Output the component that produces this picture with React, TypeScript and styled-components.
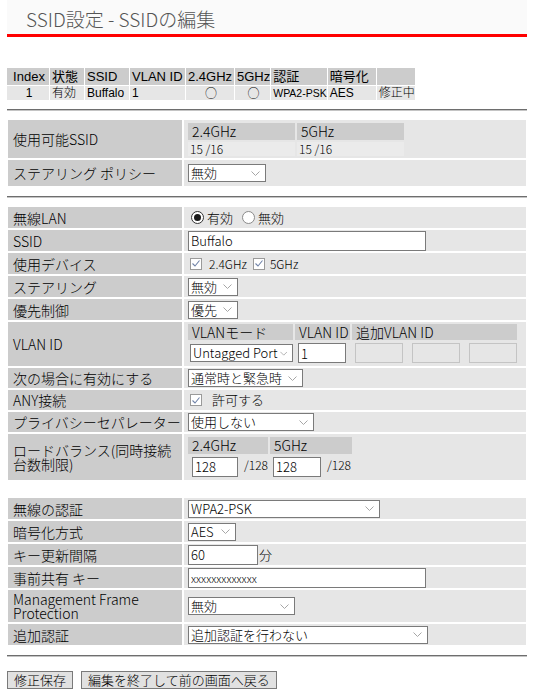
import React, { FC, ReactNode } from 'react'
import styled, { createGlobalStyle } from 'styled-components'

const jp = `"Noto Sans CJK JP", "DejaVu Sans", sans-serif`
const ui = `"Liberation Sans", "Noto Sans CJK JP", sans-serif`

const GlobalStyle = createGlobalStyle`
  *, *::before, *::after { box-sizing: border-box; }
  body {
    margin: 0;
    background: #fff;
    color: #000;
    font-family: ${jp};
    font-weight: 300;
  }
`

type THead = { label: string, w: number, center?: boolean }

const STATUS_HEAD: THead[] = [
  { label: 'Index', w: 42, center: true },
  { label: '状態', w: 34 },
  { label: 'SSID', w: 44 },
  { label: 'VLAN ID', w: 55 },
  { label: '2.4GHz', w: 48 },
  { label: '5GHz', w: 33 },
  { label: '認証', w: 51 },
  { label: '暗号化', w: 48 },
  { label: '', w: 37 },
]

type TCell = { text: string, center?: boolean, small?: boolean, mark?: boolean }

const STATUS_ROW: TCell[] = [
  { text: '1', center: true },
  { text: '有効' },
  { text: 'Buffalo' },
  { text: '1' },
  { text: '○', center: true, mark: true },
  { text: '○', center: true, mark: true },
  { text: 'WPA2-PSK', small: true },
  { text: 'AES' },
  { text: '修正中' },
]

const Chevron: FC = () => (
  <svg width="9" height="5" viewBox="0 0 9 5" aria-hidden>
    <polyline points="0.5,0.5 4.5,4.5 8.5,0.5" fill="none" stroke="#a6a6a6" strokeWidth="1" />
  </svg>
)

const Select: FC<{ w: number, children: ReactNode }> = ({ w, children }) => (
  <S.SelectBox $w={w}>
    <span>{children}</span>
    <Chevron />
  </S.SelectBox>
)

const Check: FC = () => (
  <S.CheckBox>
    <svg width="8" height="7" viewBox="0 0 8 7" aria-hidden>
      <polyline points="0.5,3.5 3,6 7.5,0.5" fill="none" stroke="#7083a8" strokeWidth="1.1" />
    </svg>
  </S.CheckBox>
)

export default function App() {
  return (
    <S.Page>
      <GlobalStyle />
      <S.Header>
        <S.Title>SSID設定 - SSIDの編集</S.Title>
      </S.Header>

      <S.StatusTable>
        <thead>
          <tr>
            {STATUS_HEAD.map((h, i) => (
              <S.StatusHead key={i} $w={h.w} $center={h.center}>{h.label}</S.StatusHead>
            ))}
          </tr>
        </thead>
        <tbody>
          <tr>
            {STATUS_ROW.map((c, i) => (
              <S.StatusCell key={i} $center={c.center} $small={c.small} $mark={c.mark}>{c.text}</S.StatusCell>
            ))}
          </tr>
        </tbody>
      </S.StatusTable>
      <S.Divider />

      <S.FormTable $top={7}>
        <tbody>
          <S.Row $h={38}>
            <S.Label>使用可能SSID</S.Label>
            <S.Value>
              <S.SubTable>
                <colgroup><S.Col $w={107} /><S.Col $w={107} /></colgroup>
                <tbody>
                  <tr>
                    <S.SubHead $h={17}>2.4GHz</S.SubHead>
                    <S.SubHead $h={17}>5GHz</S.SubHead>
                  </tr>
                  <tr>
                    <S.Count>15 /16</S.Count>
                    <S.Count>15 /16</S.Count>
                  </tr>
                </tbody>
              </S.SubTable>
            </S.Value>
          </S.Row>
          <S.Row $h={26}>
            <S.Label>ステアリング ポリシー</S.Label>
            <S.Value><Select w={78}>無効</Select></S.Value>
          </S.Row>
        </tbody>
      </S.FormTable>
      <S.Divider />

      <S.FormTable $top={7}>
        <tbody>
          <S.Row $h={21}>
            <S.Label>無線LAN</S.Label>
            <S.Value>
              <S.Inline $gap={9} $indent={3}>
                <S.Choice $gap={3}><S.Radio $on />有効</S.Choice>
                <S.Choice $gap={3}><S.Radio />無効</S.Choice>
              </S.Inline>
            </S.Value>
          </S.Row>
          <S.Row $h={21}>
            <S.Label>SSID</S.Label>
            <S.Value><S.TextBox $w={238} defaultValue="Buffalo" /></S.Value>
          </S.Row>
          <S.Row $h={21}>
            <S.Label>使用デバイス</S.Label>
            <S.Value>
              <S.Inline $gap={6} $indent={2}>
                <S.Choice $gap={7}><Check /><S.Small>2.4GHz</S.Small></S.Choice>
                <S.Choice $gap={5}><Check /><S.Small>5GHz</S.Small></S.Choice>
              </S.Inline>
            </S.Value>
          </S.Row>
          <S.Row $h={21}>
            <S.Label>ステアリング</S.Label>
            <S.Value><Select w={50}>無効</Select></S.Value>
          </S.Row>
          <S.Row $h={21}>
            <S.Label>優先制御</S.Label>
            <S.Value><Select w={50}>優先</Select></S.Value>
          </S.Row>
          <S.Row $h={44}>
            <S.Label>VLAN ID</S.Label>
            <S.Value>
              <S.SubTable>
                <colgroup>
                  <S.Col $w={105} /><S.Col $w={55} /><S.Col $w={53} /><S.Col $w={53} /><S.Col $w={53} />
                </colgroup>
                <tbody>
                  <tr>
                    <S.SubHead $h={16}>VLANモード</S.SubHead>
                    <S.SubHead $h={16}>VLAN ID</S.SubHead>
                    <S.SubHead $h={16} colSpan={3}>追加VLAN ID</S.SubHead>
                  </tr>
                  <tr>
                    <S.SubCell $pad={2}><Select w={103}>Untagged Port</Select></S.SubCell>
                    <S.SubCell $pad={3}><S.TextBox $w={48} defaultValue="1" /></S.SubCell>
                    <S.SubCell $pad={3}><S.TextBox $w={48} disabled /></S.SubCell>
                    <S.SubCell $pad={5}><S.TextBox $w={48} disabled /></S.SubCell>
                    <S.SubCell $pad={7}><S.TextBox $w={48} disabled /></S.SubCell>
                  </tr>
                </tbody>
              </S.SubTable>
            </S.Value>
          </S.Row>
          <S.Row $h={20}>
            <S.Label>次の場合に有効にする</S.Label>
            <S.Value><Select w={115}>通常時と緊急時</Select></S.Value>
          </S.Row>
          <S.Row $h={20}>
            <S.Label>ANY接続</S.Label>
            <S.Value>
              <S.Inline $gap={10} $indent={2}>
                <Check />
                <span>許可する</span>
              </S.Inline>
            </S.Value>
          </S.Row>
          <S.Row $h={20}>
            <S.Label>プライバシーセパレーター</S.Label>
            <S.Value><Select w={126}>使用しない</Select></S.Value>
          </S.Row>
          <S.Row $h={46}>
            <S.Label>ロードバランス(同時接続台数制限)</S.Label>
            <S.Value>
              <S.SubTable>
                <colgroup><S.Col $w={80} /><S.Col $w={82} /></colgroup>
                <tbody>
                  <tr>
                    <S.SubHead $h={17}>2.4GHz</S.SubHead>
                    <S.SubHead $h={17}>5GHz</S.SubHead>
                  </tr>
                  <tr>
                    <S.SubCell $pad={4}>
                      <S.TextBox $w={46} defaultValue="128" /><S.Unit>/128</S.Unit>
                    </S.SubCell>
                    <S.SubCell $pad={3}>
                      <S.TextBox $w={48} defaultValue="128" /><S.Unit>/128</S.Unit>
                    </S.SubCell>
                  </tr>
                </tbody>
              </S.SubTable>
            </S.Value>
          </S.Row>
        </tbody>
      </S.FormTable>

      <S.FormTable $top={14}>
        <tbody>
          <S.Row $h={21}>
            <S.Label>無線の認証</S.Label>
            <S.Value><Select w={192}>WPA2-PSK</Select></S.Value>
          </S.Row>
          <S.Row $h={21}>
            <S.Label>暗号化方式</S.Label>
            <S.Value><Select w={48}>AES</Select></S.Value>
          </S.Row>
          <S.Row $h={21}>
            <S.Label>キー更新間隔</S.Label>
            <S.Value>
              <S.Inline $gap={1}>
                <S.TextBox $w={70} defaultValue="60" />
                <span>分</span>
              </S.Inline>
            </S.Value>
          </S.Row>
          <S.Row $h={21}>
            <S.Label>事前共有 キー</S.Label>
            <S.Value><S.TextBox $w={238} $small defaultValue="xxxxxxxxxxxxx" /></S.Value>
          </S.Row>
          <S.Row $h={32}>
            <S.Label>Management Frame Protection</S.Label>
            <S.Value><Select w={107}>無効</Select></S.Value>
          </S.Row>
          <S.Row $h={21}>
            <S.Label>追加認証</S.Label>
            <S.Value><Select w={240}>追加認証を行わない</Select></S.Value>
          </S.Row>
        </tbody>
      </S.FormTable>
      <S.Divider />

      <S.ButtonBar>
        <S.Button type="button">修正保存</S.Button>
        <S.Button type="button">編集を終了して前の画面へ戻る</S.Button>
      </S.ButtonBar>
    </S.Page>
  )
}

const S = {
  Page: styled.div`
    width: 534px;
    padding: 0 6px;
  `,
    Header: styled.div`
      margin: 0 1px;
      height: 37px;
      padding: 3px 0 0 19px;
      background: #fafafa;
      border-bottom: 3px solid #ff0000;
    `,
      Title: styled.h1`
        margin: 0;
        font-size: 19px;
        font-weight: 300;
        line-height: 31px;
        color: #555;
      `,
    StatusTable: styled.table`
      margin-top: 30px;
      border-spacing: 1px;
      table-layout: fixed;
      font-family: ${ui};
    `,
      StatusHead: styled.th<{ $w: number, $center?: boolean }>`
        width: ${p => p.$w}px;
        height: 17px;
        padding: 0 0 0 2px;
        background: #cccccc;
        font-size: 13px;
        font-weight: normal;
        line-height: 17px;
        text-align: ${p => (p.$center ? 'center' : 'left')};
        white-space: nowrap;
      `,
      StatusCell: styled.td<{ $center?: boolean, $small?: boolean, $mark?: boolean }>`
        height: 14px;
        padding: 0 0 0 2px;
        background: #e6e6e6;
        font-family: ${p => (p.$mark ? jp : ui)};
        font-size: ${p => (p.$small ? 10.5 : 12)}px;
        line-height: 14px;
        text-align: ${p => (p.$center ? 'center' : 'left')};
        white-space: nowrap;
      `,
    Divider: styled.div`
      margin: 8px 1px 0;
      height: 2px;
      border-top: 1px solid #6e6e6e;
      border-bottom: 1px solid #c4c4c4;
    `,
    FormTable: styled.table<{ $top: number }>`
      width: 522px;
      margin-top: ${p => p.$top}px;
      border-spacing: 2px;
      table-layout: fixed;
    `,
      Row: styled.tr<{ $h: number }>`
        height: ${p => p.$h}px;
      `,
        Label: styled.td`
          width: 174px;
          padding: 0 0 0 5px;
          background: #cccccc;
          font-size: 14px;
          line-height: 14px;
          vertical-align: middle;
        `,
        Value: styled.td`
          padding: 0 0 0 4px;
          background: #e6e6e6;
          font-size: 13px;
          line-height: 16px;
          vertical-align: middle;
        `,
          Inline: styled.div<{ $gap: number, $indent?: number }>`
            display: flex;
            align-items: center;
            gap: ${p => p.$gap}px;
            padding-left: ${p => p.$indent ?? 0}px;
          `,
            Choice: styled.span<{ $gap: number }>`
              display: inline-flex;
              align-items: center;
              gap: ${p => p.$gap}px;
            `,
              Radio: styled.span<{ $on?: boolean }>`
                display: inline-flex;
                align-items: center;
                justify-content: center;
                width: 13px;
                height: 13px;
                border-radius: 50%;
                border: 1px solid ${p => (p.$on ? '#333' : '#8a8a8a')};
                background: #fff;
                &::after {
                  content: '';
                  width: 7px;
                  height: 7px;
                  border-radius: 50%;
                  background: ${p => (p.$on ? '#1a1a1a' : 'transparent')};
                }
              `,
              CheckBox: styled.span`
                display: inline-flex;
                align-items: center;
                justify-content: center;
                width: 12px;
                height: 12px;
                border: 1px solid #9a9a9a;
                background: #fff;
              `,
              Small: styled.span`
                font-size: 12px;
              `,
          SelectBox: styled.span<{ $w: number }>`
            display: inline-flex;
            align-items: center;
            justify-content: space-between;
            gap: 2px;
            width: ${p => p.$w}px;
            height: 18px;
            padding: 0 5px 0 2px;
            border: 1px solid #7a7a7a;
            background: #fff;
            font-family: ${jp};
            font-size: 13px;
            font-weight: 300;
            line-height: 16px;
            white-space: nowrap;
            vertical-align: middle;
          `,
          TextBox: styled.input<{ $w: number, $small?: boolean }>`
            width: ${p => p.$w}px;
            height: 20px;
            margin: 0;
            padding: 0 2px;
            border: 1px solid #7a7a7a;
            border-radius: 0;
            background: #fff;
            color: #000;
            font-family: ${jp};
            font-size: ${p => (p.$small ? 11 : 13)}px;
            font-weight: 300;
            vertical-align: middle;
            &:disabled {
              border-color: #c4c4c4;
              background: transparent;
            }
          `,
          SubTable: styled.table`
            margin-left: -2px;
            border-spacing: 2px;
            table-layout: fixed;
          `,
            Col: styled.col<{ $w: number }>`
              width: ${p => p.$w}px;
            `,
            SubHead: styled.th<{ $h: number }>`
              height: ${p => p.$h}px;
              padding: 0 0 0 4px;
              background: #cccccc;
              font-size: 14px;
              font-weight: 300;
              line-height: ${p => p.$h}px;
              text-align: left;
              white-space: nowrap;
            `,
            Count: styled.td`
              height: 14px;
              padding: 0 0 0 2px;
              background: #ebebeb;
              font-size: 12px;
              line-height: 14px;
            `,
            SubCell: styled.td<{ $pad: number }>`
              height: 22px;
              padding: 0 0 0 ${p => p.$pad}px;
              white-space: nowrap;
              vertical-align: middle;
            `,
              Unit: styled.span`
                margin-left: 6px;
                font-size: 12px;
              `,
    ButtonBar: styled.div`
      display: flex;
      gap: 8px;
      margin-top: 14px;
      padding-left: 1px;
    `,
      Button: styled.button`
        height: 18px;
        padding: 0 6px;
        border: 1px solid #7a7a7a;
        border-radius: 0;
        background: #e1e1e1;
        color: #000;
        font-family: ${jp};
        font-size: 13px;
        font-weight: 300;
        line-height: 16px;
      `,
}
